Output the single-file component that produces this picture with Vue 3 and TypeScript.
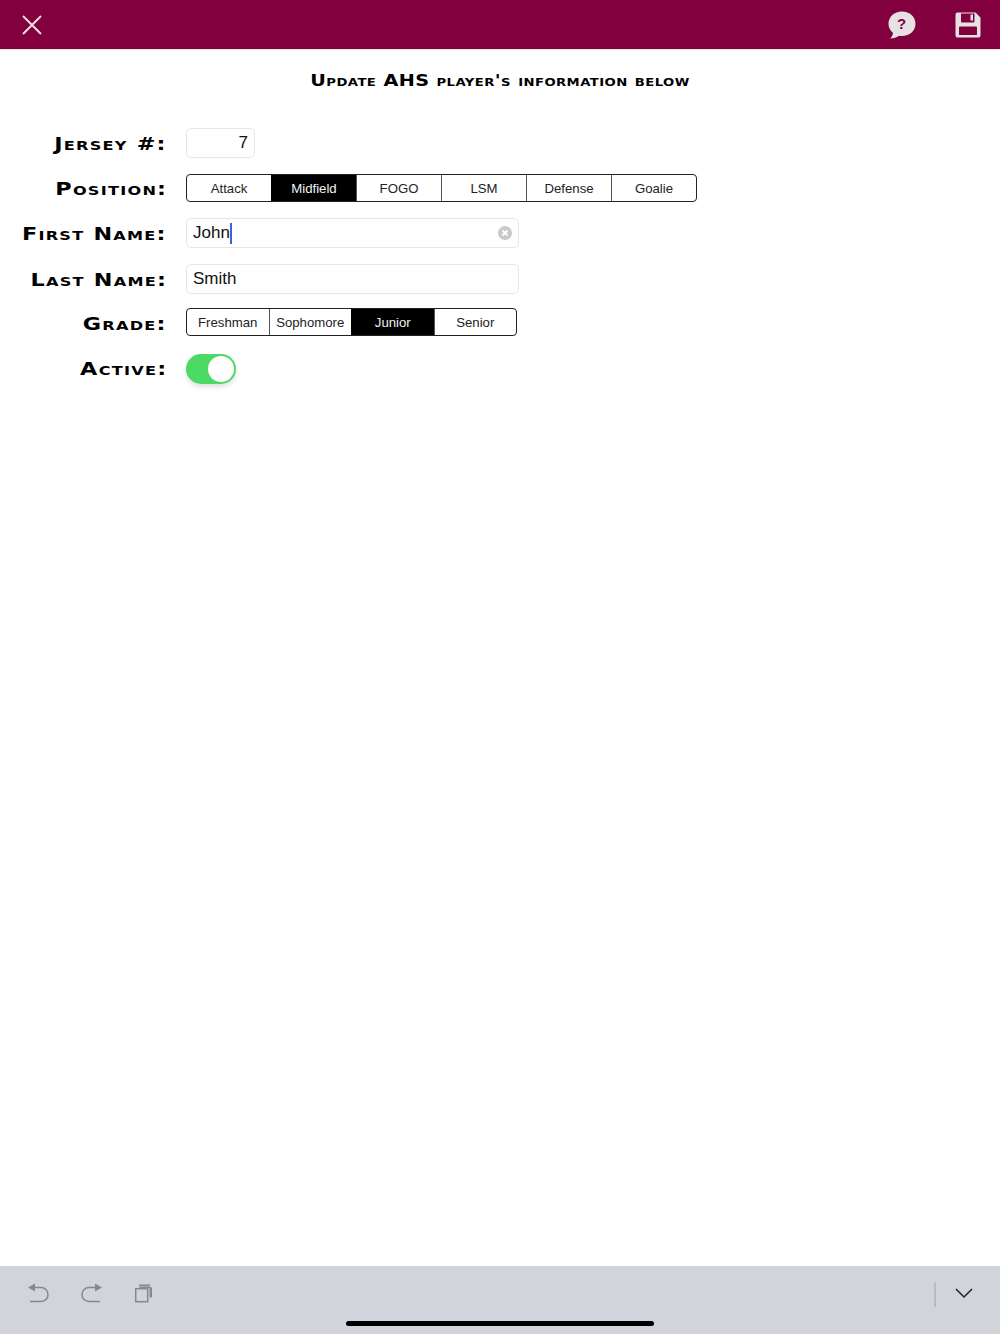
<script setup lang="ts">
import { ref } from "vue";

const positions: string[] = ["Attack", "Midfield", "FOGO", "LSM", "Defense", "Goalie"];
const grades: string[] = ["Freshman", "Sophomore", "Junior", "Senior"];

const position = ref("Midfield");
const grade = ref("Junior");
const active = ref(true);
const jersey = ref("7");
const firstName = ref("John");
const lastName = ref("Smith");
</script>

<template>
  <div class="page">
    <header class="topbar">
      <svg class="close" width="20" height="20" viewBox="0 0 20 20">
        <path d="M1 1 L19 19 M19 1 L1 19" stroke="#ecdde3" stroke-width="2" fill="none" />
      </svg>
      <div class="spacer"></div>
      <svg class="help" width="30" height="30" viewBox="0 0 30 30">
        <path d="M15 1.500C7.300 1.500 1.500 6.800 1.500 13.800C1.500 17.500 3.200 20.700 6 22.900C5.800 25 4.700 27 3 28.500C6.500 28.500 10 27.200 12.300 25.700C13.200 25.900 14.100 26 15 26C22.700 26 28.500 20.700 28.500 13.800C28.500 6.800 22.700 1.500 15 1.500Z" fill="#e6e1e3" />
        <text x="14.500" y="19" text-anchor="middle" class="help-mark">?</text>
      </svg>
      <svg class="save" width="26" height="26" viewBox="0 0 26 26">
        <path fill-rule="evenodd" fill="#e6e1e3" d="M2.500 0.500H20.500L25.500 5.500V23.500Q25.500 25.500 23.500 25.500H2.500Q0.500 25.500 0.500 23.500V2.500Q0.500 0.500 2.500 0.500ZM6 1.500V9.500Q6 10.500 7 10.500H18.500Q19.500 10.500 19.500 9.500V1.500ZM5 14.500Q4 14.500 4 15.500V23H22V15.500Q22 14.500 21 14.500Z" />
        <rect x="15.500" y="2.500" width="2.500" height="6" fill="#e6e1e3" />
      </svg>
    </header>

    <main class="content">
      <h1 class="title">Update AHS player's information below</h1>

      <div class="form">
        <label class="lbl">Jersey #:</label>
        <div class="field jersey">{{ jersey }}</div>

        <label class="lbl">Position:</label>
        <div class="segments pos">
          <div v-for="p in positions" :key="p" class="seg" :class="{ on: p === position }">{{ p }}</div>
        </div>

        <label class="lbl">First Name:</label>
        <div class="field name">
          <span>{{ firstName }}</span><span class="caret"></span>
          <svg class="clear" width="14" height="14" viewBox="0 0 14 14">
            <circle cx="7" cy="7" r="7" fill="#c9c9cb" />
            <path d="M4.500 4.500 L9.500 9.500 M9.500 4.500 L4.500 9.500" stroke="#fff" stroke-width="1.800" />
          </svg>
        </div>

        <label class="lbl">Last Name:</label>
        <div class="field name">{{ lastName }}</div>

        <label class="lbl">Grade:</label>
        <div class="segments gr">
          <div v-for="g in grades" :key="g" class="seg" :class="{ on: g === grade }">{{ g }}</div>
        </div>

        <label class="lbl">Active:</label>
        <div class="switch" :class="{ on: active }"><div class="knob"></div></div>
      </div>
    </main>

    <footer class="keys">
      <svg class="undo" width="24" height="24" viewBox="0 0 24 24">
        <path d="M4 5.500H14C18 5.500 21 8.300 21 12.500C21 16.700 18 19.500 14 19.500H3" fill="none" stroke="#85888f" stroke-width="1.500" />
        <path d="M1 5.500L8 1.500V9.500Z" fill="#85888f" />
      </svg>
      <svg class="redo" width="24" height="24" viewBox="0 0 24 24">
        <path d="M20 5.500H10C6 5.500 3 8.300 3 12.500C3 16.700 6 19.500 10 19.500H21" fill="none" stroke="#85888f" stroke-width="1.500" />
        <path d="M23 5.500L16 1.500V9.500Z" fill="#85888f" />
      </svg>
      <svg class="copy" width="20" height="22" viewBox="0 0 20 22">
        <rect x="1.700" y="6.700" width="12" height="13" fill="none" stroke="#85888f" stroke-width="1.500" />
        <path d="M5 4.500V2.500H16V4.500Z" fill="#85888f" />
        <path d="M15.500 6H18V15.500H15.500Z" fill="#85888f" />
        <path d="M5.500 5H17.500V6H5.500Z" fill="#85888f" />
      </svg>
      <div class="spacer"></div>
      <div class="divider"></div>
      <svg class="chev" width="18" height="11" viewBox="0 0 18 11">
        <path d="M1 1 L9 9 L17 1" fill="none" stroke="#202124" stroke-width="1.500" />
      </svg>
      <div class="home"></div>
    </footer>
  </div>
</template>

<style>
html,
body {
  margin: 0;
  background: #fff;
}
</style>

<style scoped>
.page {
  width: 1000px;
  height: 1334px;
  display: flex;
  flex-direction: column;
  font-family: "Liberation Sans", Arial, sans-serif;
  color: #000;
  overflow: hidden;
}

.topbar {
  height: 49px;
  background: #83003f;
  border-bottom: 1px solid #f1e3e9;
  box-sizing: content-box;
  display: flex;
  align-items: center;
  padding: 0 19px 0 22px;
}

.spacer {
  flex: 1;
}

.help {
  margin-right: 38px;
}

.help-mark {
  font: bold 15px "Liberation Sans", sans-serif;
  fill: #83003f;
}

.content {
  flex: 1;
}

.title {
  margin: 20px 0 0;
  height: 22px;
  line-height: 22px;
  text-align: center;
  font-family: "DejaVu Sans", sans-serif;
  font-size: 16px;
  font-weight: 700;
  font-variant: small-caps;
  letter-spacing: 0.35px;
  transform: scaleX(1.2);
}

.form {
  margin-top: 36px;
  display: grid;
  grid-template-columns: 167px auto;
  grid-auto-rows: min-content;
  column-gap: 19px;
  row-gap: 16px;
  justify-items: start;
  align-items: center;
}

.lbl {
  justify-self: end;
  font-family: "DejaVu Sans", sans-serif;
  font-size: 18px;
  font-weight: 700;
  font-variant: small-caps;
  letter-spacing: 1px;
  white-space: nowrap;
  transform: scaleX(1.24);
  transform-origin: right center;
}

.field {
  box-sizing: border-box;
  height: 30px;
  border: 1px solid #e6e6e8;
  border-radius: 5px;
  font-size: 17px;
  line-height: 28px;
  display: flex;
  align-items: center;
  position: relative;
  color: #111;
}

.jersey {
  width: 69px;
  justify-content: flex-end;
  padding-right: 6px;
}

.name {
  width: 333px;
  padding-left: 6px;
}

.caret {
  width: 2px;
  height: 21px;
  background: #3e5fe0;
}

.clear {
  position: absolute;
  right: 6px;
  top: 7px;
}

.segments {
  box-sizing: border-box;
  height: 28px;
  display: flex;
  border: 1px solid #222;
  border-radius: 4px;
  overflow: hidden;
  font-size: 13.200px;
  color: #222;
}

.pos {
  width: 511px;
}

.gr {
  width: 331px;
  margin-top: -2px;
}

.seg {
  flex: 1;
  display: flex;
  align-items: center;
  justify-content: center;
  border-left: 1px solid #555;
}

.seg:first-child {
  border-left: 0;
}

.seg.on {
  background: #000;
  color: #f2f2f2;
  border-left-color: #000;
}

.switch {
  width: 50px;
  height: 30px;
  border-radius: 15px;
  background: #4cd964;
  position: relative;
  box-shadow: 0 3px 5px rgba(0, 0, 0, 0.12);
  margin-top: 2px;
}

.knob {
  position: absolute;
  right: 2px;
  top: 2px;
  width: 26px;
  height: 26px;
  border-radius: 50%;
  background: #fff;
}

.keys {
  height: 68px;
  box-sizing: border-box;
  background: #d1d4da;
  display: flex;
  align-items: flex-start;
  padding: 16px 27px 0 27px;
  position: relative;
}

.redo {
  margin-left: 28px;
}

.copy {
  margin-left: 31px;
}

.divider {
  width: 2px;
  height: 25px;
  background: #b9bcc2;
  margin-right: 19px;
}

.chev {
  margin-top: 6px;
}

.home {
  position: absolute;
  left: 346px;
  bottom: 8px;
  width: 308px;
  height: 5px;
  border-radius: 3px;
  background: #000;
}
</style>
